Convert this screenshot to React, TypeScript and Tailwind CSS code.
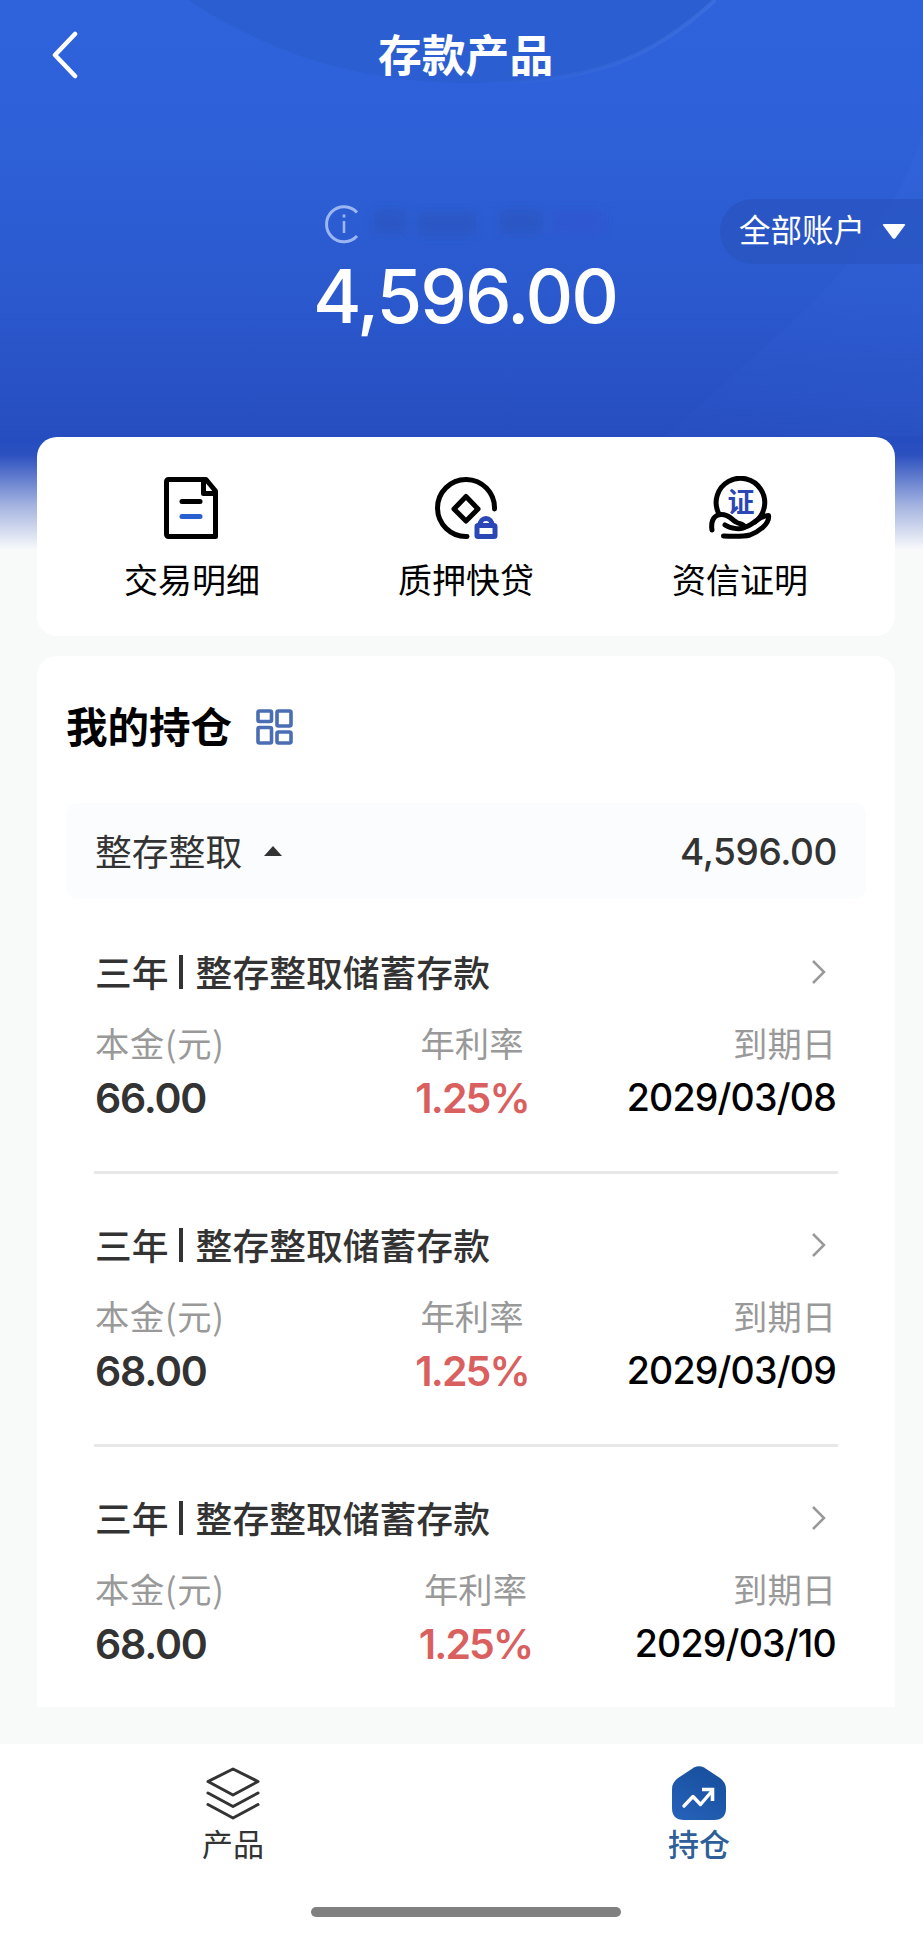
import type { ReactNode } from "react";

type Deposit = {
  id: number;
  title: string;
  principal: string;
  rate: string;
  dueDate: string;
};

const deposits: Deposit[] = [
  { id: 1, title: "整存整取储蓄存款", principal: "66.00", rate: "1.25%", dueDate: "2029/03/08" },
  { id: 2, title: "整存整取储蓄存款", principal: "68.00", rate: "1.25%", dueDate: "2029/03/09" },
  { id: 3, title: "整存整取储蓄存款", principal: "68.00", rate: "1.25%", dueDate: "2029/03/10" },
];

// ------------------------------------------------
// Icons
// ------------------------------------------------
function BackIcon() {
  return (
    <svg width="28" height="48" viewBox="0 0 28 48" fill="none" stroke="white" strokeWidth="4.5" strokeLinecap="round" strokeLinejoin="round">
      <path d="M24 3 4 24l20 21" />
    </svg>
  );
}

function InfoIcon() {
  return (
    <svg width="40" height="40" viewBox="0 0 40 40" fill="none" stroke="#9bb6f2" strokeWidth="3">
      <path d="M33 8.5A17.5 17.5 0 1 0 33 32" />
      <path d="M20 17v12" strokeWidth="2.6" />
      <path d="M20 10.5v3" strokeWidth="2.8" />
    </svg>
  );
}

function DetailIcon() {
  return (
    <svg width="64" height="64" viewBox="0 0 64 64" fill="none" stroke="black" strokeWidth="5" strokeLinejoin="round" strokeLinecap="round">
      <path d="M46 3.5H8.5a2 2 0 0 0-2 2v53a2 2 0 0 0 2 2h47V15Z" />
      <path d="M43.5 4v13.5H55" />
      <path d="M22 25.5h18" />
      <path d="M22 40.5h18" stroke="#2a5fd0" />
    </svg>
  );
}

function LoanIcon() {
  return (
    <svg width="64" height="64" viewBox="0 0 64 64" fill="none" stroke="black" strokeWidth="5" strokeLinejoin="round" strokeLinecap="round">
      <path d="M60.5 33A28.5 28.5 0 1 0 33 60.5" />
      <path d="M32 20.5 44 33 32 45 20 33Z" />
      <rect x="43" y="49.5" width="18" height="11" rx="1" stroke="#2b46b5" />
      <path d="M46 49a6 6.5 0 0 1 12 0" stroke="#2b46b5" />
    </svg>
  );
}

function CertificateIcon() {
  return (
    <svg width="64" height="64" viewBox="0 0 64 64" fill="none" stroke="black" strokeWidth="5" strokeLinejoin="round" strokeLinecap="round">
      <path d="M10.5 37A24.3 24.3 0 1 1 47 46" />
      <path d="M4 54C2.5 45 6 38.5 13.5 38.5C21 38.5 23 43 28 46C31 48 36 48 37 51C34 54 23 53 17 49" />
      <path d="M37 51C46 49 50 40 60.5 39.5C62 48 50 56 42 59C34 61 24 60.5 15.5 60" />
      <text
        x="33"
        y="35.5"
        textAnchor="middle"
        fontSize="27"
        fontWeight="700"
        fill="#2b46b5"
        stroke="none"
        fontFamily="'Noto Sans CJK SC', sans-serif"
      >
        证
      </text>
    </svg>
  );
}

function GridIcon() {
  return (
    <svg width="37" height="36" viewBox="0 0 37 36" fill="none" stroke="#4a6db3" strokeWidth="3.6">
      <rect x="2" y="2" width="13.5" height="10.5" rx="1.5" />
      <rect x="21" y="2" width="14" height="15" rx="1.5" />
      <rect x="2" y="18.5" width="13.5" height="15.5" rx="1.5" />
      <rect x="21" y="23" width="14" height="11" rx="1.5" />
    </svg>
  );
}

function LayersIcon() {
  return (
    <svg width="54" height="54" viewBox="0 0 54 54" fill="none" stroke="#333333" strokeWidth="3" strokeLinejoin="round" strokeLinecap="round">
      <path d="M27 3 52 15.5 27 29 2 15.5Z" />
      <path d="M2 27 27 40.5 52 27" />
      <path d="M2 38.5 27 52 52 38.5" />
    </svg>
  );
}

function HoldingIcon() {
  return (
    <svg width="56" height="56" viewBox="0 0 56 56" fill="none">
      <defs>
        <linearGradient id="holding" x1="0.8" y1="0" x2="0.2" y2="1">
          <stop offset="0" stopColor="#184e9c" />
          <stop offset="1" stopColor="#2461b8" />
        </linearGradient>
      </defs>
      <path d="M23 2.5Q28 0 33 2.5L49 13Q55 17.5 55 24V43Q55 55 43 55H13Q1 55 1 43V24Q1 17.5 7 13Z" fill="url(#holding)" />
      <path d="M13 41 22 31.5 29.5 39.5 41 26" stroke="white" strokeWidth="3.4" strokeLinecap="round" strokeLinejoin="round" />
      <path d="M31 24.5H41.5V36" stroke="white" strokeWidth="3.6" />
    </svg>
  );
}

function HeaderDecoration() {
  return (
    <svg className="absolute left-0 top-0" width="923" height="436" viewBox="0 0 923 436" fill="none">
      <defs>
        <filter id="smudge" x="-20%" y="-50%" width="140%" height="200%">
          <feGaussianBlur stdDeviation="5" />
        </filter>
        <linearGradient id="side" x1="1" y1="0" x2="0" y2="1">
          <stop offset="0" stopColor="#3f73e6" stopOpacity="0.15" />
          <stop offset="1" stopColor="#3f73e6" stopOpacity="0.03" />
        </linearGradient>
        <linearGradient id="rim" x1="0" y1="0" x2="1" y2="0">
          <stop offset="0" stopColor="#4a7ae6" stopOpacity="0" />
          <stop offset="1" stopColor="#4a7ae6" stopOpacity="0.45" />
        </linearGradient>
      </defs>
      <path d="M188 0C262 48 350 84 478 83C592 82 650 60 715 0Z" fill="#2a5bc9" fillOpacity="0.6" />
      <path d="M478 83C592 82 650 60 715 0" stroke="url(#rim)" strokeWidth="4" />
      <path d="M923 130C900 220 820 300 750 360Q700 405 665 436H923Z" fill="url(#side)" />
      <g filter="url(#smudge)" fill="#2a4fb0" fillOpacity="0.4">
        <rect x="374" y="210" width="32" height="24" />
        <rect x="418" y="212" width="58" height="24" />
        <rect x="500" y="210" width="42" height="24" />
        <rect x="552" y="210" width="52" height="24" fill="#2f4fd0" />
      </g>
    </svg>
  );
}

// ------------------------------------------------
// Building blocks
// ------------------------------------------------
function Action({ icon, label }: { icon: ReactNode; label: string }) {
  return (
    <button className="flex w-[274px] flex-col items-center">
      {icon}
      <span className="mt-[14px] text-[34px] leading-[50px] text-black">{label}</span>
    </button>
  );
}

function DepositItem({ deposit, last }: { deposit: Deposit; last: boolean }) {
  return (
    <li className={`h-[273px] pt-[47px] ${last ? "" : "border-b-[3px] border-[#e8e8e8]"}`}>
      <div className="flex h-[48px] items-center justify-between pl-[1px] pr-[11px]">
        <h3 className="flex items-center text-[36.8px] font-medium text-[#333333]">
          三年
          <span className="ml-[10px] mr-[13px] h-[34px] w-[4px] bg-[#333333]" />
          {deposit.title}
        </h3>
        <svg width="16" height="26" viewBox="0 0 16 26" fill="none" stroke="#999999" strokeWidth="2.5">
          <path d="M2 2 13 13 2 24" />
        </svg>
      </div>
      <div className="mt-[23px] flex justify-between pl-[1px] pr-[2px] leading-[46px]">
        <div className="w-[230px]">
          <p className="text-[34.3px] tracking-[0.7px] text-[#999999]">本金(元)</p>
          <p className="mt-[10px] font-[Inter] text-[41px] font-semibold tracking-[-1.2px] text-[#333333]">{deposit.principal}</p>
        </div>
        <div className={`w-[160px] text-center ${last ? "ml-[20px]" : "ml-[13px]"}`}>
          <p className="text-[34.3px] text-[#999999]">年利率</p>
          <p className="mt-[10px] font-[Inter] text-[41px] font-semibold tracking-[-1.9px] text-[#d9605f]">{deposit.rate}</p>
        </div>
        <div className="w-[230px] text-right">
          <p className="text-[34.3px] text-[#999999]">到期日</p>
          <p className="mt-[10px] font-[Inter] text-[37.5px] font-medium tracking-[-0.8px] text-black">{deposit.dueDate}</p>
        </div>
      </div>
    </li>
  );
}

export default function App() {
  return (
    <main className="relative flex h-[1935px] w-[923px] flex-col overflow-hidden bg-[#f8fafa] bg-[linear-gradient(#2f63db_0px,#2e61d9_120px,#2b59ce_290px,#264dc0_440px,#2b50bf_455px,#a3b2e0_505px,#f8fafa_550px)] font-['Noto_Sans_CJK_SC',sans-serif]">
      <HeaderDecoration />

      {/* Header */}
      <header className="relative flex h-[110px] items-center">
        <button className="ml-[51px]">
          <BackIcon />
        </button>
        <h1 className="mb-[4px] ml-[299px] text-[43.8px] font-bold leading-[60px] text-white">存款产品</h1>
      </header>

      {/* Total amount */}
      <section className="relative h-[327px]">
        <div className="flex items-start justify-between pl-[324px] pt-[89px]">
          <div className="mt-[5px]">
            <InfoIcon />
          </div>
          <button className="flex h-[65px] w-[203px] items-center rounded-l-full bg-[#2854be]/70 pl-[19px] text-[31.5px] text-white">
            <span className="-mt-[5px]">全部账户</span>
            <svg className="ml-[17px]" width="24" height="17" viewBox="0 0 24 17" fill="white">
              <path d="M2 1h20q2 0 .8 1.6L13.500 15q-1.5 1.7-3 0L1.2 2.6Q0 1 2 1Z" />
            </svg>
          </button>
        </div>
        <p className="mt-[-8px] pl-[7px] text-center font-[Inter] text-[74px] font-medium leading-[80px] tracking-[-2px] text-white">
          4,596.00
        </p>
      </section>

      {/* Shortcuts */}
      <section className="relative ml-[37px] mr-[28px] flex h-[199px] justify-center rounded-[20px] bg-white pt-[39px]">
        <Action icon={<DetailIcon />} label="交易明细" />
        <Action icon={<LoanIcon />} label="质押快贷" />
        <Action icon={<CertificateIcon />} label="资信证明" />
      </section>

      {/* Holdings */}
      <section className="ml-[37px] mr-[28px] mt-[20px] h-[1051px] rounded-t-[20px] bg-white px-[29px] pt-[40px]">
        <div className="flex h-[60px] items-center">
          <h2 className="-mt-[1px] text-[41.5px] font-bold text-black">我的持仓</h2>
          <span className="ml-[24px] mt-[2px]">
            <GridIcon />
          </span>
        </div>

        <div className="mt-[47px] flex h-[96px] items-center justify-between rounded-[12px] bg-[#fbfcfe] pl-[29px] pr-[29px] text-[#333333]">
          <div className="flex items-center">
            <span className="-mt-[1px] text-[36.8px]">整存整取</span>
            <svg className="ml-[22px]" width="18" height="10" viewBox="0 0 18 10" fill="#333333">
              <path d="M9 0 18 10H0Z" />
            </svg>
          </div>
          <span className="mt-[2px] font-[Inter] text-[37px] font-medium tracking-[-0.4px]">4,596.00</span>
        </div>

        <ul className="px-[28px] pt-[2px]">
          {deposits.map((deposit, i) => (
            <DepositItem key={deposit.id} deposit={deposit} last={i === deposits.length - 1} />
          ))}
        </ul>
      </section>

      {/* Tab bar */}
      <nav className="mt-[37px] flex h-[191px] flex-col items-center bg-white">
        <div className="flex w-full justify-between pl-[182px] pr-[173px] pt-[21px]">
          <button className="flex w-[102px] flex-col items-center">
            <span className="flex h-[56px] items-center">
              <LayersIcon />
            </span>
            <span className="-mt-[1px] text-[31px] leading-[46px] text-[#333333]">产品</span>
          </button>
          <button className="flex w-[102px] flex-col items-center">
            <HoldingIcon />
            <span className="-mt-[1px] text-[31px] font-medium leading-[46px] text-[#2f5f98]">持仓</span>
          </button>
        </div>
        <div className="ml-[9px] mt-[41px] h-[10px] w-[310px] rounded-full bg-[#808080]" />
      </nav>
    </main>
  );
}
